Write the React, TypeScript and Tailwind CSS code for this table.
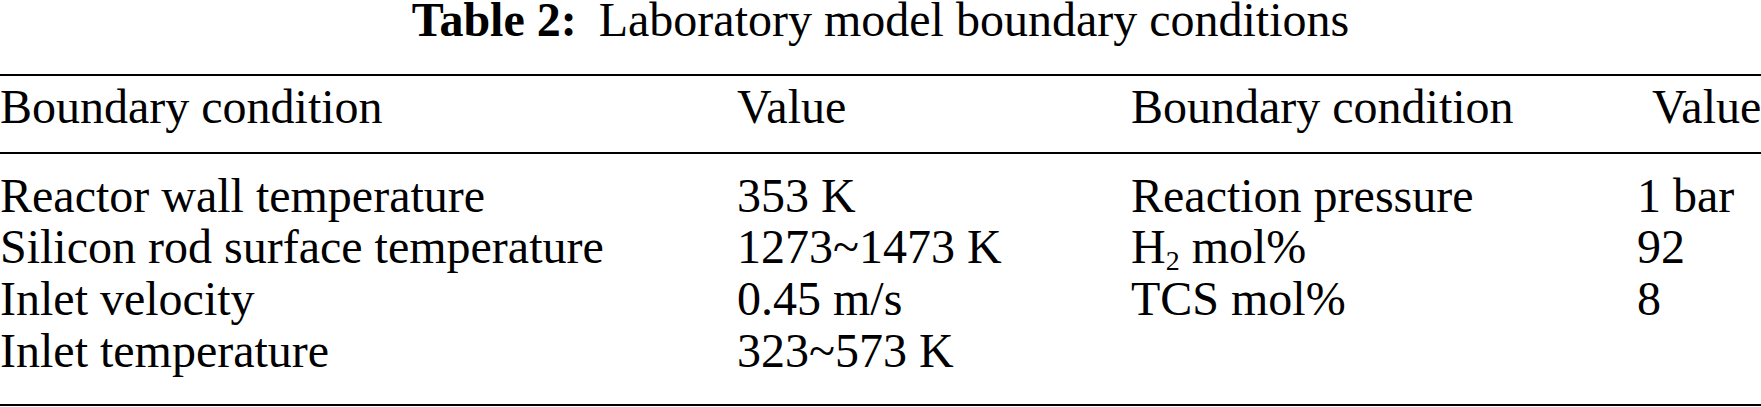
import React from "react";

const rows: [React.ReactNode, string, React.ReactNode, string][] = [
  ["Reactor wall temperature", "353 K", "Reaction pressure", "1 bar"],
  ["Silicon rod surface temperature", "1273~1473 K", <>H<sub className="text-[28px]">2</sub> mol%</>, "92"],
  ["Inlet velocity", "0.45 m/s", "TCS mol%", "8"],
  ["Inlet temperature", "323~573 K", "", ""],
];

export default function App() {
  return (
    <div
      className="w-[1761px] h-[407px] overflow-hidden bg-white text-black"
      style={{ fontFamily: '"Liberation Serif", "Times New Roman", serif' }}
    >
      <div className="flex justify-center items-start text-[48px] leading-[39px] h-[74px] whitespace-nowrap">
        <span className="font-bold">Table 2:</span>
        <span className="ml-[22px]">Laboratory model boundary conditions</span>
      </div>
      <div className="border-t-2 border-black" />
      <div className="grid grid-cols-[737px_394px_506px_124px] text-[48px] leading-[51.7px] whitespace-nowrap pt-[5px] pb-[19px]">
        <div>Boundary condition</div>
        <div>Value</div>
        <div>Boundary condition</div>
        <div className="pl-[15px]">Value</div>
      </div>
      <div className="border-t-2 border-black" />
      <div className="grid grid-cols-[737px_394px_506px_124px] text-[48px] leading-[51.7px] whitespace-nowrap pt-[16px] pb-[27px]">
        {rows.map((r, i) => (
          <React.Fragment key={i}>
            <div>{r[0]}</div>
            <div>{r[1]}</div>
            <div>{r[2]}</div>
            <div>{r[3]}</div>
          </React.Fragment>
        ))}
      </div>
      <div className="border-t-2 border-black" />
    </div>
  );
}
